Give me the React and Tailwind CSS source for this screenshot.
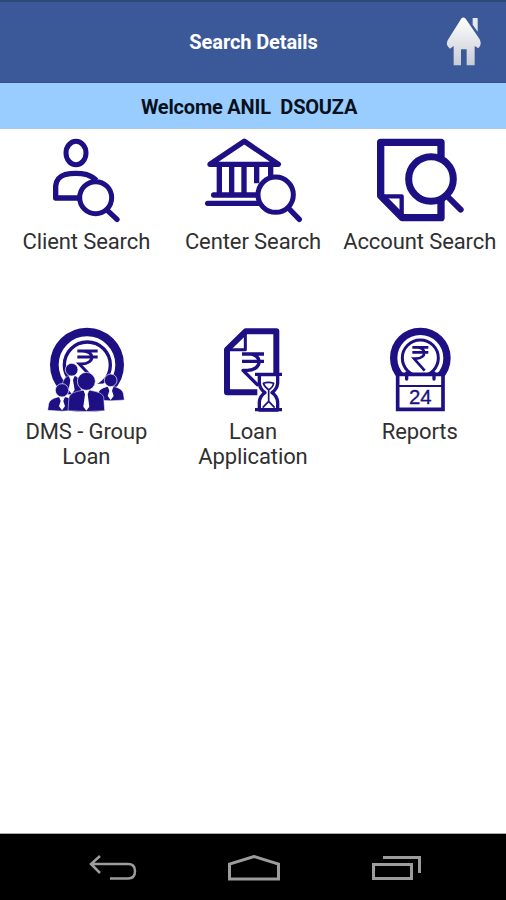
const INK = "#1d0f84";

function ClientIcon() {
  return (
    <svg viewBox="-11 0 300 300" className="h-[100px] w-[100px]" fill="none" stroke={INK} strokeWidth="15">
      <ellipse cx="109" cy="69" rx="30" ry="35" />
      <path d="M120 204H48V168Q50 142 75 134Q108 126 142 134Q160 140 170 151" strokeWidth="16" strokeLinejoin="round" />
      <circle cx="168" cy="203" r="48" />
      <path d="M203 241L232 268" strokeWidth="16" strokeLinecap="round" />
    </svg>
  );
}

function CenterIcon() {
  return (
    <svg viewBox="0 0 330 300" className="h-[100px] w-[110px]" fill="none" stroke={INK} strokeWidth="16" strokeLinecap="round" strokeLinejoin="round">
      <path d="M36 103L139 34L241 103Z" />
      <path d="M64 105V192M101 105V192M138 105V192M176 105V160M218 105V140" strokeLinecap="butt" />
      <path d="M47 195H180M29 220H186" />
      <circle cx="233" cy="194" r="53" fill="#fff" strokeWidth="15" />
      <path d="M272 235L304 268" />
    </svg>
  );
}

function AccountIcon() {
  return (
    <svg viewBox="0 0 330 300" className="h-[100px] w-[110px]" fill="none" stroke={INK} strokeWidth="22" strokeLinejoin="round">
      <path d="M228 82V37H47V197L112 263H228V208" />
      <path d="M52 199H110V258" strokeWidth="13" />
      <circle cx="198" cy="147" r="67" fill="#fff" strokeWidth="21" />
      <path d="M246 198L287 239" strokeWidth="18" strokeLinecap="round" />
    </svg>
  );
}

function Person({ x, y, r, w, h }) {
  const s = y + r;
  return (
    <g>
      <path
        d={`M${x - w} ${s + h}L${x - w + 3} ${s + 20}Q${x - w + 6} ${s + 6} ${x - 12} ${s}H${x + 12}Q${x + w - 6} ${s + 6} ${x + w - 3} ${s + 20}L${x + w} ${s + h}Q${x} ${s + h + 5} ${x - w} ${s + h}Z`}
        fill={INK}
        stroke="#fff"
        strokeWidth="1.5"
      />
      <path d={`M${x - 9} ${s - 1}H${x + 9}L${x + 4} ${s + 12}L${x + 9} ${s + h - 12}L${x} ${s + h}L${x - 9} ${s + h - 12}L${x - 4} ${s + 12}Z`} fill="#fff" />
      <circle cx={x} cy={y} r={r} fill={INK} stroke="#fff" strokeWidth="2" />
    </g>
  );
}

function GroupIcon() {
  return (
    <svg viewBox="-11 0 300 300" className="h-[100px] w-[100px]" fill="none">
      <circle cx="142" cy="134" r="98" stroke={INK} strokeWidth="26" />
      <circle cx="143" cy="135" r="69" stroke={INK} strokeWidth="10" />
      <path d="M113 93H174M113 111H174M125 93C167 91 167 132 125 132H119L151 166" stroke={INK} strokeWidth="9" />
      <path d="M60 212L90 196L210 190L225 212L210 266H60Z" fill="#fff" />
      <Person x={96} y={149} r={19} w={30} h={54} />
      <Person x={213} y={181} r={19} w={41} h={40} />
      <Person x={67} y={211} r={20} w={43} h={40} />
      <Person x={140} y={184} r={27} w={55} h={61} />
    </svg>
  );
}

function LoanIcon() {
  return (
    <svg viewBox="-6 0 270 300" className="h-[100px] w-[90px]" fill="none" stroke={INK} strokeLinejoin="round">
      <path d="M142 217H51V89L107 34H199V167" strokeWidth="18" />
      <path d="M54 89H106V36" strokeWidth="9" />
      <path d="M96 102H162M96 124H162M112 102C159 99 159 151 112 151H99L145 197" strokeWidth="10" />
      <path d="M148 164H203V190Q201 207 186 218Q201 228 203 246V270H148V246Q150 228 165 218Q150 207 148 190Z" fill="#fff" strokeWidth="10" />
      <path d="M135 163H216M135 269H216" strokeWidth="10" />
      <path d="M160 190Q175 184 191 190Q188 203 176 209Q164 202 160 190ZM176 210V244L158 263M176 244L194 263" strokeWidth="5" />
    </svg>
  );
}

function ReportsIcon() {
  return (
    <svg viewBox="0 0 270 300" className="h-[100px] w-[90px]" fill="none" stroke={INK}>
      <circle cx="136" cy="114" r="80" strokeWidth="22" />
      <circle cx="136" cy="114" r="54" strokeWidth="9" />
      <path d="M112 82H160M112 97H160M123 82C156 80 156 116 123 116H117L149 152" strokeWidth="8" />
      <path d="M68 168H204V271H68Z" fill="#fff" stroke="none" />
      <path d="M68 163H204V268H68Z" strokeWidth="11" />
      <path d="M70 198H202" strokeWidth="6" />
      <path d="M95 159V177M177 159V177" strokeWidth="10" strokeLinecap="round" />
      <text x="136" y="253" textAnchor="middle" fill={INK} stroke={INK} strokeWidth="1" fontSize="61" fontFamily="Liberation Sans, sans-serif">24</text>
    </svg>
  );
}

function HomeLogo() {
  return (
    <svg viewBox="0 0 180 210" className="mb-0.5 h-[70px] w-[60px]">
      <defs>
        <linearGradient id="silver" x1="0" y1="0" x2="0" y2="1">
          <stop offset="0" stopColor="#fff" />
          <stop offset="1" stopColor="#c7cbd3" />
        </linearGradient>
      </defs>
      <path d="M113 36H128V77L113 56Z" fill="#e3e8f3" />
      <path d="M80 36Q86 32 92 38L134 100Q142 117 130 127L119 120V178H95V130H78V178H56V120L45 128Q31 118 38 103Z" fill="url(#silver)" />
    </svg>
  );
}

const tiles = [
  { label: "Client Search", Icon: ClientIcon },
  { label: "Center Search", Icon: CenterIcon },
  { label: "Account Search", Icon: AccountIcon },
  { label: "DMS - Group Loan", Icon: GroupIcon },
  { label: "Loan Application", Icon: LoanIcon },
  { label: "Reports", Icon: ReportsIcon },
];

export default function App() {
  return (
    <div className="flex h-[900px] w-[506px] flex-col overflow-hidden bg-white font-['Roboto',sans-serif]">
      <header className="grid h-[83px] shrink-0 grid-cols-[72px_1fr_71px] items-center border-t-2 border-b border-t-[#2d4979] border-b-[#355087] bg-[#3b5998]">
        <span />
        <h1 className="text-center text-[20px] leading-6 font-bold tracking-[-0.1px] text-white">Search Details</h1>
        <HomeLogo />
      </header>
      <div className="flex h-[46px] shrink-0 items-center justify-center border-b border-[#a9c8e8] bg-[#99ccff] pt-0.5 pr-2 text-[20px] font-bold tracking-[-0.2px] whitespace-pre text-[#08111c]">
        Welcome ANIL  DSOUZA
      </div>
      <main className="grid flex-1 auto-rows-[190px] grid-cols-3 px-[3px] pt-px">
        {tiles.map(({ label, Icon }) => (
          <button key={label} type="button" className="flex flex-col items-center">
            <Icon />
            <span className="-mt-px max-w-[156px] text-center text-[22px] leading-[25px] tracking-[-0.1px] text-[#303030]">{label}</span>
          </button>
        ))}
      </main>
      <nav className="h-[67px] shrink-0 border-t border-[#aaa] bg-black">
        <div className="flex h-full items-center justify-between pt-1 pr-[85px] pl-[89px] text-[#9c9c9c]">
          <svg viewBox="0 0 48 28" className="h-[28px] w-12" fill="none" stroke="currentColor" strokeWidth="2.5">
            <path d="M11 1L2 9L11 18M3 9H39Q46 9 46 16Q46 23.500 39 23.500H21" />
          </svg>
          <svg viewBox="0 0 54 28" className="h-[28px] w-[54px]" fill="none" stroke="currentColor" strokeWidth="3">
            <path d="M2.500 24V9L27 1.500L51.500 9V24Z" />
          </svg>
          <svg viewBox="0 0 50 28" className="h-[28px] w-[50px]" fill="none" stroke="currentColor" strokeWidth="3">
            <path d="M2.500 9.500H40.500V23.500H2.500ZM12 2.500H48.500V18" />
          </svg>
        </div>
      </nav>
    </div>
  );
}
